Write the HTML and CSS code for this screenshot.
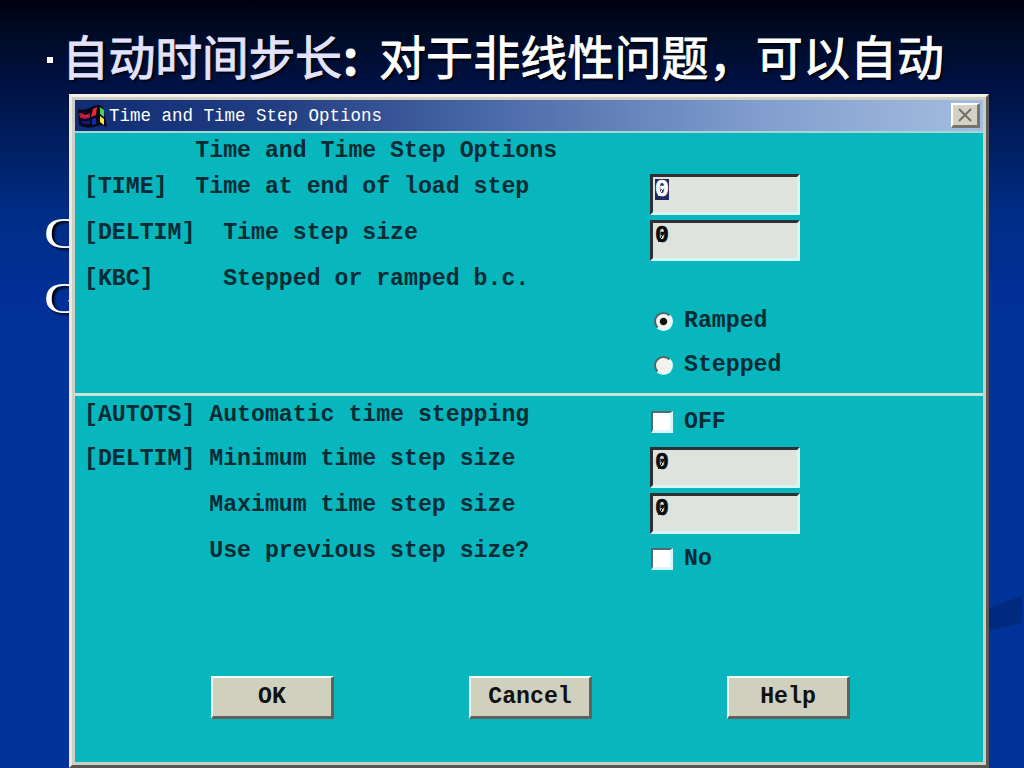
FILE: index.html
```html
<!DOCTYPE html>
<html lang="zh-CN">
<head>
<meta charset="utf-8">
<title>Time and Time Step Options</title>
<link rel="stylesheet" href="styles.css">
</head>
<body>
<main class="slide">
  <svg class="swoosh" width="34" height="36" viewBox="0 0 34 36"><path d="M0 12L34 0V27L0 35Z" fill="#002a7f"/></svg>
  <h1 class="headline"><span class="bullet"></span><span class="term">自动时间步长</span><span class="colon">:</span><span class="rest">对于非线性问题，可以自动</span></h1>
  <div class="commands"><p>C</p><p>G</p></div>
  <section class="dialog">
    <header class="titlebar">
      <svg class="logo" width="30" height="28" viewBox="0 0 30 28">
        <path d="M1 7Q8 9 14 5Q22 1 26 5L30 25Q25 22 20 24Q10 28 2 23Z" fill="#080818"/>
        <path d="M2 11h3l3 2 5-2v5l-5 1-5-1z" fill="#a01a48"/><path d="M4 13h7v2H4z" fill="#e81838"/><path d="M4 19h6l3-1v4H6z" fill="#101d78"/>
        <path d="M16 7l4-2-1 8-5 2z" fill="#ef2630"/><path d="M23 5l4 3v7l-4-3z" fill="#42d45a"/>
        <path d="M15 17l4-1v6l-4 1z" fill="#1525b4"/><path d="M23 14l4 3v6l-4-3z" fill="#f4e63c"/>
      </svg>
      <span class="caption">Time and Time Step Options</span>
      <button class="close" aria-label="Close"><svg width="16" height="14" viewBox="0 0 16 14"><path d="M2 1l12 12M14 1L2 13" stroke="#706f68" stroke-width="2" fill="none"/></svg></button>
    </header>
    <div class="panel upper">
      <div class="labels">
        <pre class="heading">        Time and Time Step Options</pre>
        <pre>[TIME]  Time at end of load step</pre>
        <pre>[DELTIM]  Time step size</pre>
        <pre>[KBC]     Stepped or ramped b.c.</pre>
      </div>
      <div class="controls">
        <div class="field"><span class="selected">0</span></div>
        <div class="field"><span>0</span></div>
        <div class="choice first"><i class="radio on"></i>Ramped</div>
        <div class="choice"><i class="radio"></i>Stepped</div>
      </div>
    </div>
    <div class="panel lower">
      <div class="labels">
        <pre class="auto">[AUTOTS] Automatic time stepping</pre>
        <pre>[DELTIM] Minimum time step size</pre>
        <pre>         Maximum time step size</pre>
        <pre>         Use previous step size?</pre>
      </div>
      <div class="controls">
        <div class="option"><i class="check"></i>OFF</div>
        <div class="field"><span>0</span></div>
        <div class="field"><span>0</span></div>
        <div class="option last"><i class="check"></i>No</div>
      </div>
    </div>
    <footer class="actions"><button>OK</button><button>Cancel</button><button>Help</button></footer>
  </section>
</main>
</body>
</html>
```
FILE: styles.css
```css
* { box-sizing: border-box; }
body { margin: 0; }
.slide {
  position: relative;
  width: 1024px;
  height: 768px;
  overflow: hidden;
  background: linear-gradient(#000012 0, #000a20 25px, #001143 85px, #002064 150px, #002d87 215px, #003098 300px, #003399 360px);
}
.swoosh { position: absolute; left: 988px; top: 596px; }
.headline {
  display: flex;
  align-items: center;
  height: 94px;
  margin: 0;
  padding: 16px 0 0 47px;
  font: 400 47px/70px "Noto Sans CJK SC", sans-serif;
  color: #fff;
  text-shadow: 2px 2px 2px #000;
  -webkit-text-stroke: .9px currentColor;
  white-space: nowrap;
}
.bullet { width: 6px; height: 6px; margin: 9px 9px 0 0; background: #fff; }
.term { width: 281px; color: #e3e3ff; letter-spacing: -.4px; }
.colon { width: 36px; font-weight: 700; }
.rest { letter-spacing: .1px; }
.commands { padding: 107px 0 0 44px; font: 45px/65px "Liberation Serif", serif; color: #fff; text-shadow: 2px 2px 2px #000; }
.commands p { width: 60px; margin: 0; transform: scaleX(1.2); transform-origin: left; }
.dialog {
  position: absolute;
  left: 69px;
  top: 94px;
  width: 920px;
  height: 674px;
  display: flex;
  flex-direction: column;
  padding: 3px 3px 1px 3px;
  background: #08b7bd;
  border: 3px solid #d0cfc3;
  border-top-color: #f2f0e5;
  border-left-color: #ece9e2;
  border-right-color: #5d5854;
  border-bottom-color: #585754;
  box-shadow: inset 3px 3px #cfcfc5, inset -3px -3px #c7d2c5;
  font: 700 23.2px/46px "Liberation Mono", monospace;
  color: #052b35;
}
.titlebar {
  display: flex;
  align-items: center;
  flex: none;
  height: 33px;
  padding: 0 3px 0 2px;
  border-bottom: 2px solid #a5d7d5;
  background: linear-gradient(90deg, #102c74, #223f83 23%, #506fac 49%, #819dce 75%, #a4bddf);
}
.logo { flex: none; width: 30px; }
.caption { margin-left: 2px; font-size: 17.5px; font-weight: 400; line-height: 30px; color: #fff; }
.close { display: grid; place-items: center; width: 29px; height: 25px; margin-left: auto; padding: 0; background: #d4d2c7; border: 2px solid #fff; border-right: 3px solid #74746f; border-bottom: 3px solid #74746f; }
.panel { display: flex; flex: none; }
.upper { height: 263px; border-bottom: 3px solid #c9e4d5; }
.labels { width: 575px; padding-left: 9px; }
.labels pre { margin: 0; font: inherit; }
.labels .heading { height: 31px; line-height: 36px; }
.controls { width: 151px; }
.field { width: 150px; height: 41px; margin-bottom: 5px; padding: 1px 2px; background: #dfe3dd; border: 3px solid #302f34; border-right-color: #d6f6f1; border-bottom-color: #d6f6f1; line-height: 24px; color: #090b0c; }
.field span { display: inline-block; height: 21px; line-height: 22px; -webkit-text-stroke: .6px currentColor; background: linear-gradient(120deg, transparent 46%, currentColor 46% 54%, transparent 54%) center / 8px 12px no-repeat; }
.field .selected { background-color: #202960; color: #fff; }
.upper .controls { padding-top: 41px; }
.choice { display: flex; align-items: center; height: 44px; padding-left: 4px; gap: 11px; }
.choice.first { margin-top: 38px; }
.radio { width: 19px; height: 19px; border-radius: 50%; background: #f4f2ee; border: 2px solid #4b6869; border-right-color: #d9ffff; border-bottom-color: #d9ffff; }
.radio.on { background: radial-gradient(circle, #111 0 3.2px, #f4f2ee 4.2px); }
.lower { height: 195px; }
.lower .auto { line-height: 40px; height: 41px; margin-top: -1px; }
.option { display: flex; align-items: center; height: 51px; padding-left: 1px; gap: 11px; }
.option.last { height: 39px; }
.check { width: 22px; height: 22px; background: #fff; border: 2px solid #55696b; border-right: 3px solid #d7f7fa; border-bottom: 3px solid #d7f7fa; }
.actions { display: flex; gap: 135px; padding: 85px 0 0 136px; }
.actions button { width: 123px; height: 43px; padding: 0; font: inherit; line-height: 34px; color: #111; background: #d0d0be; border: 2px solid #f0fff5; border-right: 3px solid #62605c; border-bottom: 3px solid #62605c; }
```
